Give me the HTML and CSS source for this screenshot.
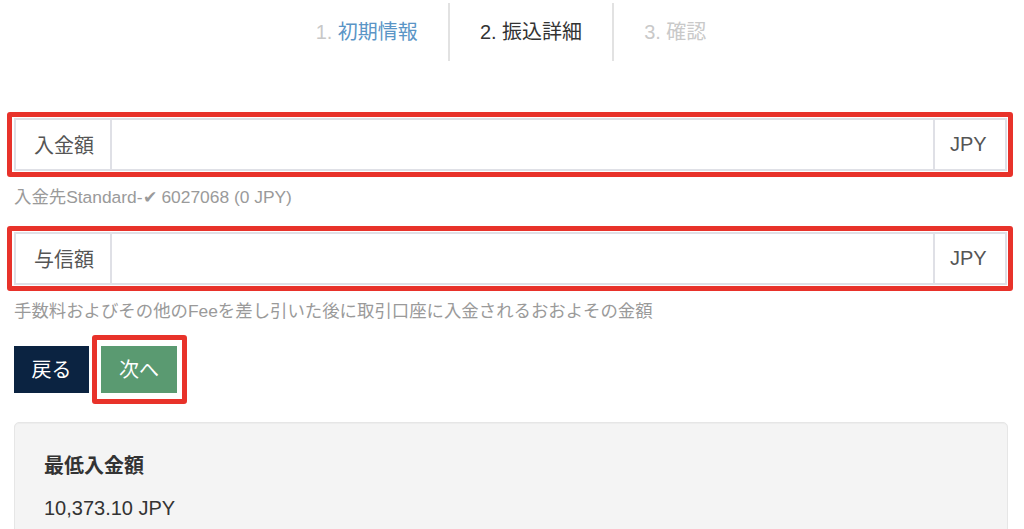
FILE: index.html
```html
<!DOCTYPE html>
<html lang="ja">
<head>
<meta charset="utf-8">
<title>振込詳細</title>
<link rel="stylesheet" href="styles.css">
</head>
<body>
<div class="page">
  <nav class="steps">
    <div class="step step-done"><span class="num">1.</span> 初期情報</div>
    <div class="step step-active">2. 振込詳細</div>
    <div class="step step-todo">3. 確認</div>
  </nav>

  <div class="mark mark-field">
    <div class="input-group">
      <div class="addon addon-label">入金額</div>
      <div class="input"></div>
      <div class="addon addon-unit">JPY</div>
    </div>
  </div>
  <p class="help help-first">入金先Standard-✔ 6027068 (0 JPY)</p>

  <div class="mark mark-field">
    <div class="input-group">
      <div class="addon addon-label">与信額</div>
      <div class="input"></div>
      <div class="addon addon-unit">JPY</div>
    </div>
  </div>
  <p class="help help-second">手数料およびその他のFeeを差し引いた後に取引口座に入金されるおおよその金額</p>

  <div class="actions">
    <button class="btn btn-back">戻る</button>
    <div class="mark mark-btn">
      <button class="btn btn-next">次へ</button>
    </div>
  </div>

  <div class="well">
    <h3 class="well-title">最低入金額</h3>
    <p class="well-value">10,373.10 JPY</p>
  </div>
</div>
</body>
</html>
```

FILE: styles.css
```css
html, body {
  margin: 0;
  padding: 0;
  background: #ffffff;
}

body {
  font-family: "Liberation Sans", "Noto Sans CJK JP", sans-serif;
  color: #333333;
  overflow: hidden;
}

.page {
  padding: 0 16px 0 14px;
}

/* steps */
.steps {
  display: flex;
  justify-content: center;
  margin-top: 3px;
  height: 58px;
}

.step {
  padding: 0 30px;
  font-size: 20px;
  line-height: 58px;
  white-space: nowrap;
}

.step + .step {
  border-left: 2px solid #e2e2e2;
}

.step-done {
  color: #5a95c6;
}

.step-done .num {
  color: #c8c8c8;
}

.step-active {
  color: #333333;
}

.step-todo {
  color: #c9c9c9;
}

/* red annotation boxes */
.mark {
  border: 5px solid #e8322a;
  border-radius: 3px;
}

.mark-field {
  margin: 0 -5px 0 -7px;
  padding: 1px 1px 1px 2px;
}

.steps + .mark-field {
  margin-top: 51px;
}

/* input group */
.input-group {
  display: flex;
  height: 53px;
  box-sizing: border-box;
  border: 2px solid #dfe0e6;
  background: #ffffff;
}

.addon {
  display: flex;
  align-items: center;
  font-size: 20px;
  color: #555555;
}

.addon-label {
  width: 96px;
  box-sizing: border-box;
  padding-left: 18px;
  border-right: 2px solid #dfe0e6;
}

.input {
  flex: 1;
}

.addon-unit {
  width: 72px;
  box-sizing: border-box;
  padding-left: 15px;
  border-left: 2px solid #dfe0e6;
}

/* help text */
.help {
  margin: 10px 0 0;
  font-size: 17.4px;
  line-height: 20px;
  color: #9a9a9a;
}

.help-first {
  margin-bottom: 19px;
}

.help-second {
  margin-bottom: 14px;
}

/* buttons */
.actions {
  display: flex;
  align-items: center;
  gap: 3px;
}

.btn {
  font-family: "Liberation Sans", "Noto Sans CJK JP", sans-serif;
  font-size: 20px;
  line-height: 24px;
  height: 47px;
  border: 0;
  border-radius: 0;
  color: #ffffff;
  padding: 0;
  cursor: pointer;
}

.btn-back {
  width: 75px;
  background: #0b2341;
}

.mark-btn {
  padding: 6px 5px 6px 4px;
  display: flex;
}

.btn-next {
  width: 76px;
  background: #5a9a71;
}

/* well */
.well {
  margin-top: 18px;
  background: #f4f4f4;
  border: 1px solid #e6e6e6;
  border-radius: 5px;
  padding: 30px 29px 40px;
  box-shadow: inset 0 1px 1px rgba(0, 0, 0, 0.03);
}

.well-title {
  margin: 0;
  font-size: 20px;
  line-height: 26px;
  font-weight: bold;
  color: #333333;
}

.well-value {
  margin: 16px 0 0;
  font-size: 20px;
  line-height: 26px;
  color: #333333;
}
```
